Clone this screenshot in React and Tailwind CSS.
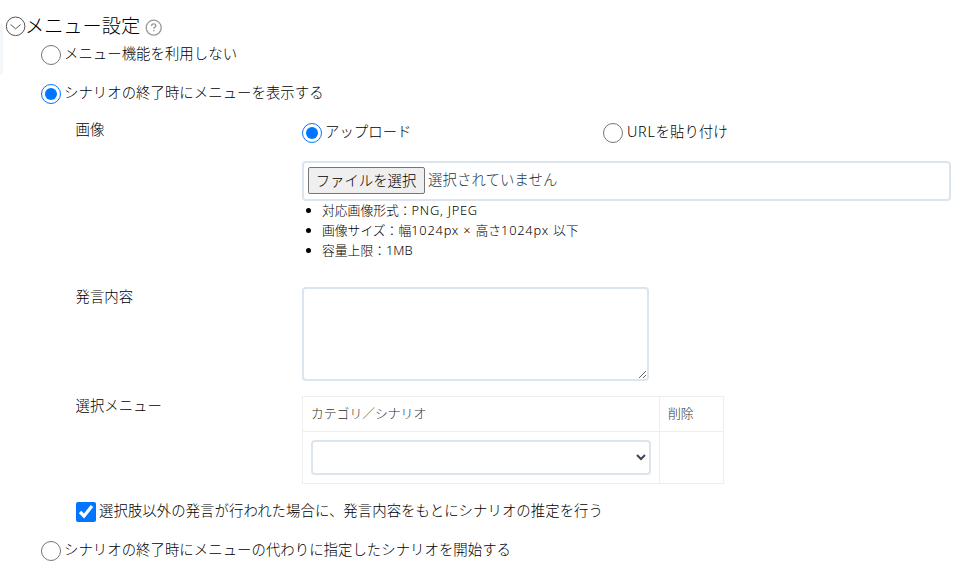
import { useState } from 'react'

function Radio({ name, checked, onChange, className, children }) {
  return (
    <label className={`flex items-center h-5 ${className || ''}`}>
      <input type="radio" name={name} checked={checked} onChange={onChange} className="size-5 shrink-0" />
      <span className="ml-[3px] leading-5 mt-[-2px] tracking-[0.03px] whitespace-nowrap">{children}</span>
    </label>
  )
}

function Row({ label, className, children }) {
  return (
    <div className={`flex ${className || ''}`}>
      <div className="w-[227px] shrink-0 pl-[0.5px] leading-5">{label}</div>
      <div className="flex-1">{children}</div>
    </div>
  )
}

export default function App() {
  const [mode, setMode] = useState('show')
  const [source, setSource] = useState('upload')
  const [guess, setGuess] = useState(true)

  return (
    <div className="flex w-[976px] h-[577px] bg-white text-black text-[14.4px] font-light overflow-hidden font-['Noto_Sans','Noto_Sans_CJK_JP',sans-serif]">
      <div className="w-[3px] h-[50px] mt-6 bg-[#f3f7fa]" />
      <div className="flex-1 pl-[2px] pt-[15px]">
        <h2 className="flex items-center h-[22px] text-[19.2px]">
          <svg width="20" height="21" viewBox="0 0 20 21" fill="none" stroke="#555" strokeWidth="1" className="shrink-0 overflow-visible">
            <circle cx="10.6" cy="10.3" r="9.3" />
            <path d="M5.6 8.5l5 4.3 5-4.3" />
          </svg>
          <span className="leading-[22px] whitespace-nowrap mt-[-1px]">メニュー設定</span>
          <svg width="17" height="17" viewBox="0 0 17 17" fill="none" stroke="#999" className="ml-[5px] mt-[3px] shrink-0">
            <circle cx="8.7" cy="8.7" r="7.5" strokeWidth="1.3" />
            <path d="M6.6 7c0-1.3.9-2.1 2.1-2.1s2.1.7 2.1 1.8c0 1.4-1.9 1.5-1.9 3M8.9 11v1.3" strokeWidth="1.4" />
          </svg>
        </h2>

        <div className="pl-9 pt-2">
          <Radio name="mode" checked={mode === 'none'} onChange={() => setMode('none')}>メニュー機能を利用しない</Radio>
          <Radio name="mode" checked={mode === 'show'} onChange={() => setMode('show')} className="mt-[19px]">
            シナリオの終了時にメニューを表示する
          </Radio>

          <div className="pl-[34px] pt-4">
            <Row label="画像" className="h-[167px]">
              <div className="flex pt-[3px]">
                <Radio name="source" checked={source === 'upload'} onChange={() => setSource('upload')} className="w-[301px]">
                  アップロード
                </Radio>
                <Radio name="source" checked={source === 'url'} onChange={() => setSource('url')}>
                  <span className="tracking-[0.7px] ml-px">URL</span>を貼り付け
                </Radio>
              </div>
              <div className="flex items-center w-[649px] h-10 mt-[18px] pl-1 border-2 border-[#dce5ed] rounded text-[#22364a]">
                <button className="w-[117px] h-[27px] mt-[-2px] bg-[#efefef] border border-[#767676] rounded-[2px] text-black font-light leading-[23px] whitespace-nowrap">
                  <span className="-ml-px">ファイルを選択</span>
                </button>
                <span className="ml-[3px] leading-5 mt-[-2px] tracking-[0.1px]">選択されていません</span>
              </div>
              <ul className="list-disc pl-5 mt-[-1px] text-[12.8px] leading-5">
                <li>対応画像形式：<span className="tracking-[0.75px]">PNG, JPEG</span></li>
                <li>
                  画像サイズ：幅<span className="tracking-[0.8px]">1024px × </span>
                  高さ<span className="tracking-[0.8px]">1024px </span>以下
                </li>
                <li>容量上限：1MB</li>
              </ul>
            </Row>

            <Row label="発言内容" className="h-[109px]">
              <textarea className="block w-[347px] h-[94px] border-2 border-[#dce5ed] rounded resize" />
            </Row>

            <Row label="選択メニュー" className="h-[106px]">
              <table className="w-[422px] border-collapse text-[12.8px] text-[#333] table-fixed">
                <thead>
                  <tr className="h-[35px] text-left">
                    <th className="w-[357px] px-2 border border-[#ecefef] font-light">カテゴリ／シナリオ</th>
                    <th className="px-2 border border-[#ecefef] font-light">削除</th>
                  </tr>
                </thead>
                <tbody>
                  <tr className="h-[52px]">
                    <td className="px-2 border border-[#ecefef]">
                      <select className="block w-[340px] h-[35px] bg-white border-2 border-[#dce5ed] rounded text-[#33475b]" />
                    </td>
                    <td className="border border-[#ecefef]" />
                  </tr>
                </tbody>
              </table>
            </Row>

            <label className="flex items-center h-5 ml-[1px]">
              <input type="checkbox" checked={guess} onChange={() => setGuess(!guess)} className="size-5" />
              <span className="ml-[3px] leading-5 mt-[-2px] tracking-[0.05px]">
                選択肢以外の発言が行われた場合に、発言内容をもとにシナリオの推定を行う
              </span>
            </label>
          </div>

          <Radio name="mode" checked={mode === 'replace'} onChange={() => setMode('replace')} className="mt-[19px]">
            シナリオの終了時にメニューの代わりに指定したシナリオを開始する
          </Radio>
        </div>
      </div>
    </div>
  )
}
